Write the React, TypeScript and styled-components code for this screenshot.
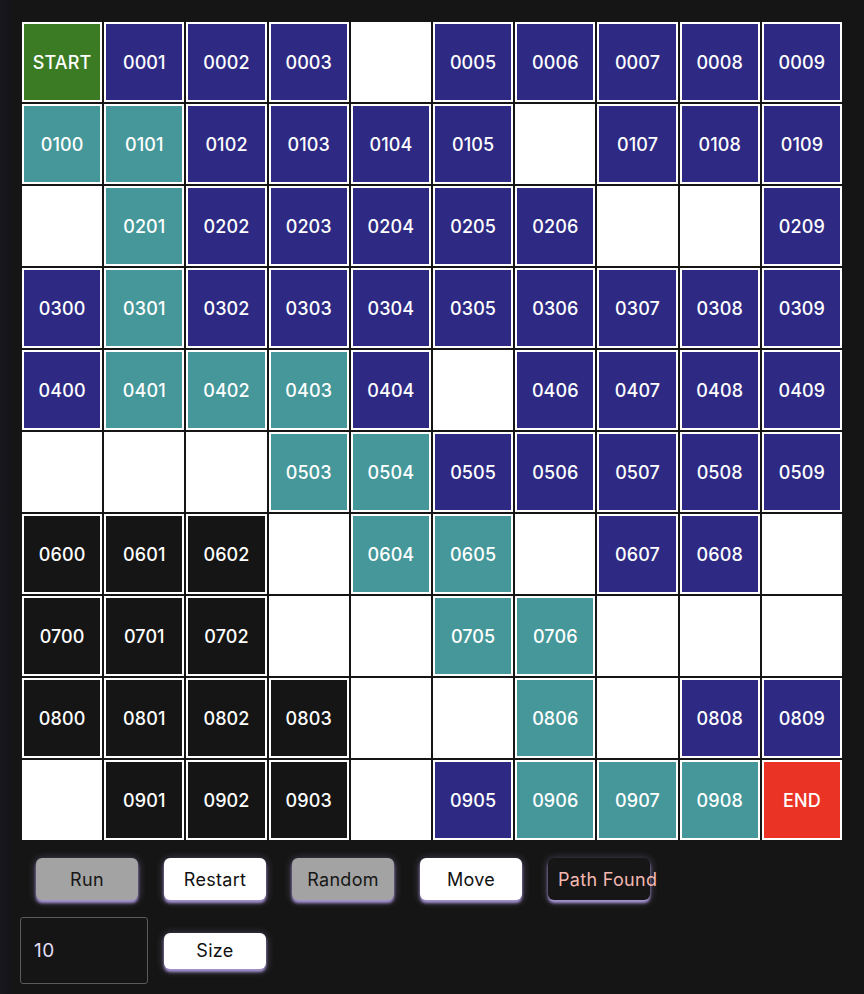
import React from "react";
import styled, { createGlobalStyle } from "styled-components";

const GlobalStyle = createGlobalStyle`
  html, body {
    margin: 0;
    padding: 0;
    background: #151515;
  }
  body {
    font-family: Inter, "Noto Sans", "Liberation Sans", sans-serif;
    min-height: 994px;
    background: linear-gradient(to right, #17171d 0px, #151518 10px, #151515 16px);
  }
`;

type Kind = "S" | "B" | "T" | "W" | "K" | "E";

const ROWS: string[] = [
  "SBBBWBBBBB",
  "TTBBBBWBBB",
  "WTBBBBBWWB",
  "BTBBBBBBBB",
  "BTTTBWBBBB",
  "WWWTTBBBBB",
  "KKKWTTWBBW",
  "KKKWWTTWWW",
  "KKKKWWTWBB",
  "WKKKWBTTTE",
];

const COLORS: Record<Kind, string> = {
  S: "#3b7b23",
  B: "#2e2a84",
  T: "#45979a",
  W: "#ffffff",
  K: "#151515",
  E: "#ea3324",
};

const Page = styled.div`
  padding: 22px 22px 0 22px;
`;

const Grid = styled.div`
  width: 820px;
  display: grid;
  grid-template-columns: repeat(10, 1fr);
  grid-auto-rows: 80px;
  gap: 2px;
`;

const Cell = styled.div<{ $bg: string }>`
  box-sizing: border-box;
  border: 2px solid #ffffff;
  background: ${(p) => p.$bg};
  color: #ffffff;
  display: flex;
  align-items: center;
  justify-content: center;
  font-size: 18px;
  font-weight: 500;
  letter-spacing: 0.1px;
`;

const ControlRow = styled.div`
  display: flex;
  gap: 26px;
  padding-left: 14px;
  margin-top: 18px;
`;

const SizeRow = styled.div`
  display: flex;
  align-items: center;
  gap: 16px;
  margin-top: 17px;
  margin-left: -2px;
`;

const Button = styled.button<{ $variant: "gray" | "white" | "dark"; $h?: number }>`
  box-sizing: border-box;
  width: 102px;
  height: ${(p) => p.$h ?? 42}px;
  border: none;
  border-radius: 6px;
  padding: 0 10px;
  display: block;
  text-align: center;
  white-space: nowrap;
  overflow: visible;
  font-family: Inter, "Noto Sans", "Liberation Sans", sans-serif;
  font-size: 18px;
  letter-spacing: 0.3px;
  font-weight: 400;
  background: ${(p) =>
    p.$variant === "gray" ? "#a3a3a3" : p.$variant === "white" ? "#ffffff" : "#161616"};
  color: ${(p) =>
    p.$variant === "gray" ? "#161616" : p.$variant === "white" ? "#111111" : "#f2b8b2"};
  box-shadow: 0 3px 3px rgba(185, 165, 235, 0.85), 0 1px 9px rgba(185, 165, 235, 0.4);
  cursor: pointer;
`;

const SizeInput = styled.input`
  box-sizing: border-box;
  width: 128px;
  height: 67px;
  background: #151515;
  border: 1px solid #5a5a5a;
  border-radius: 3px;
  padding: 0 13px;
  color: #e4def6;
  font-family: Inter, "Noto Sans", "Liberation Sans", sans-serif;
  font-size: 19px;
  letter-spacing: 0.6px;
  outline: none;
`;

function label(kind: Kind, r: number, c: number): string {
  if (kind === "S") return "START";
  if (kind === "E") return "END";
  if (kind === "W") return "";
  return `${String(r).padStart(2, "0")}${String(c).padStart(2, "0")}`;
}

export default function App() {
  return (
    <>
      <GlobalStyle />
      <Page>
        <Grid>
          {ROWS.map((row, r) =>
            row.split("").map((k, c) => {
              const kind = k as Kind;
              return (
                <Cell key={`${r}-${c}`} $bg={COLORS[kind]}>
                  {label(kind, r, c)}
                </Cell>
              );
            })
          )}
        </Grid>
        <ControlRow>
          <Button $variant="gray">Run</Button>
          <Button $variant="white">Restart</Button>
          <Button $variant="gray">Random</Button>
          <Button $variant="white">Move</Button>
          <Button $variant="dark">Path Found</Button>
        </ControlRow>
        <SizeRow>
          <SizeInput defaultValue="10" />
          <Button $variant="white" $h={36}>
            Size
          </Button>
        </SizeRow>
      </Page>
    </>
  );
}
